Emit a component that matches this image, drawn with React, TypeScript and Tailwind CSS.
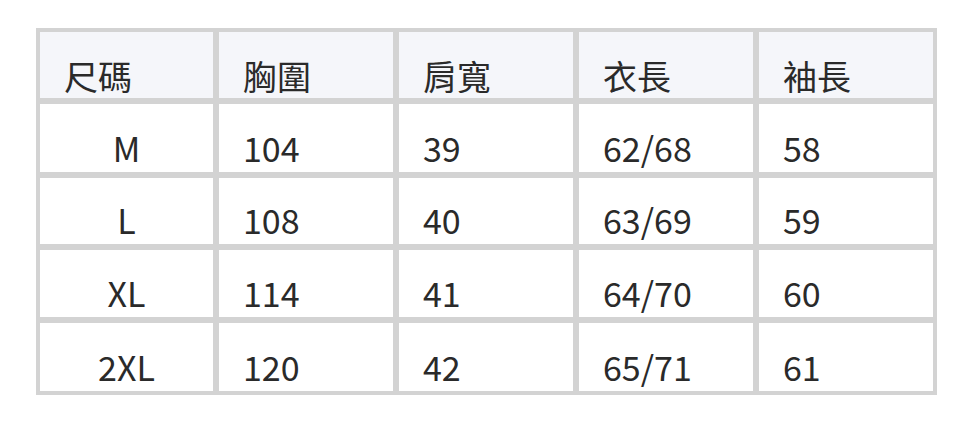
const headers = ["尺碼", "胸圍", "肩寬", "衣長", "袖長"];

const rows = [
  ["M", "104", "39", "62/68", "58"],
  ["L", "108", "40", "63/69", "59"],
  ["XL", "114", "41", "64/70", "60"],
  ["2XL", "120", "42", "65/71", "61"],
];

export default function App() {
  return (
    <div
      className="h-[422px] w-[972px] bg-white pl-[36px] pt-[28px] text-[#2a2a2a]"
      style={{ fontFamily: '"Noto Sans CJK TC", "Noto Sans", sans-serif' }}
    >
      <div className="grid w-[901px] grid-cols-[173px_174px_174px_174px_174px] grid-rows-[66px_68px_66px_67px_68px] gap-[6px] bg-[#d3d3d3] p-[4px] text-[34px] leading-[34px]">
        {headers.map((h) => (
          <div key={h} className="flex items-end bg-[#f5f6fa] pb-[5px] pl-[24px]">
            {h}
          </div>
        ))}
        {rows.map((r) =>
          r.map((c, i) => (
            <div
              key={r[0] + i}
              className={
                i === 0
                  ? "flex items-end justify-center bg-white pb-[7px]"
                  : "flex items-end bg-white pb-[7px] pl-[24px]"
              }
            >
              {c}
            </div>
          ))
        )}
      </div>
    </div>
  );
}
